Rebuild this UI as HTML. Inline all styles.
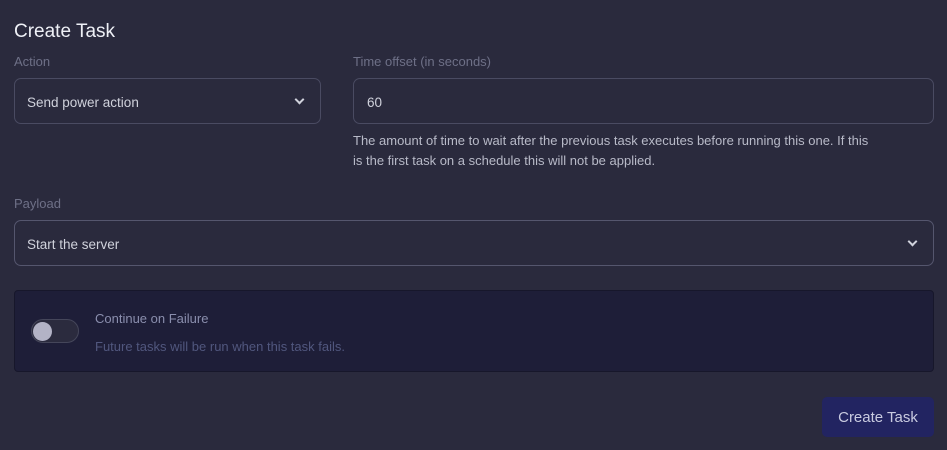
<!DOCTYPE html>
<html><head><style>
*{margin:0;padding:0;box-sizing:border-box}
body{width:947px;height:450px;background:#2a2a3d;font-family:"Liberation Sans",sans-serif;position:relative;overflow:hidden;color:#c9cbd6}
.a{position:absolute}
.lbl{font-size:13px;color:#6e7087}
.box{border:1px solid #4a4b62;border-radius:7px;background:#2a2a3d}
.val{font-size:13.5px;color:#d0d2dc}
.chev{position:absolute;width:7px;height:7px;border-right:2px solid #d0d2dc;border-bottom:2px solid #d0d2dc;transform:rotate(45deg)}
</style></head><body>
<div class="a" style="left:14px;top:21px;font-size:19px;color:#eef0f6">Create Task</div>
<div class="a lbl" style="left:14px;top:54px">Action</div>
<div class="a box" style="left:14px;top:78px;width:307px;height:46px"><span class="a val" style="left:12px;top:16px">Send power action</span><span class="chev" style="left:281px;top:17px"></span></div>
<div class="a lbl" style="left:353px;top:54px">Time offset (in seconds)</div>
<div class="a box" style="left:353px;top:78px;width:581px;height:46px"><span class="a val" style="left:13px;top:16px">60</span></div>
<div class="a" style="left:353px;top:131px;width:590px;font-size:13px;line-height:20px;color:#b8bac8;white-space:nowrap">The amount of time to wait after the previous task executes before running this one. If this<br>is the first task on a schedule this will not be applied.</div>
<div class="a lbl" style="left:14px;top:196px">Payload</div>
<div class="a box" style="left:14px;top:220px;width:920px;height:46px;border-color:#55566e"><span class="a val" style="left:12px;top:16px">Start the server</span><span class="chev" style="left:894px;top:17px"></span></div>
<div class="a" style="left:14px;top:290px;width:920px;height:82px;background:#1e1e38;border:1px solid #17172b;border-radius:4px"></div>
<div class="a" style="left:31px;top:319px;width:48px;height:24px;border-radius:12px;background:#2b2b3e;border:1px solid #45465a"></div>
<div class="a" style="left:33px;top:322px;width:19px;height:19px;border-radius:50%;background:#b3b3c6"></div>
<div class="a" style="left:95px;top:311px;font-size:13px;color:#8a8ead">Continue on Failure</div>
<div class="a" style="left:95px;top:339px;font-size:13px;color:#51577e">Future tasks will be run when this task fails.</div>
<div class="a" style="left:822px;top:397px;width:112px;height:40px;background:#222461;border-radius:5px;font-size:15px;color:#c9cbe0;text-align:center;line-height:41px">Create Task</div>
</body></html>
